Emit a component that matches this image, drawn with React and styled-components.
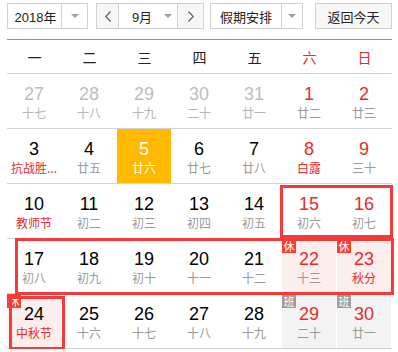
import React from 'react'
import styled, { createGlobalStyle } from 'styled-components'

const GlobalStyle = createGlobalStyle`
  body {
    margin: 0;
    background: #fff;
    font-family: "Liberation Sans", "Noto Sans CJK SC", sans-serif;
  }
`

const RED = '#e62b2b'

const Page = styled.div`
  padding: 3px 0 0 7px;
  width: 385px;
`

const Toolbar = styled.div`
  display: flex;
  height: 26px;
`

const Box = styled.div`
  display: flex;
  box-sizing: border-box;
  height: 26px;
  border: 1px solid #d2d2d2;
  background: #fff;
  margin-right: ${p => p.$gap || 0}px;
`

const Label = styled.div`
  width: ${p => p.$w}px;
  display: flex;
  align-items: center;
  justify-content: ${p => p.$align || 'center'};
  padding-left: ${p => p.$pl || 0}px;
  box-sizing: border-box;
  font-size: 13px;
  color: #222;
  font-family: "Liberation Sans", "Noto Sans CJK SC", sans-serif;
`

const ArrowCell = styled.div`
  width: ${p => p.$w}px;
  border-left: ${p => (p.$line ? '1px solid #d2d2d2' : 'none')};
  display: flex;
  align-items: center;
  justify-content: center;
`

const Caret = styled.span`
  width: 0;
  height: 0;
  border-left: 4px solid transparent;
  border-right: 4px solid transparent;
  border-top: 4px solid #a0a0a0;
`

const NavBtn = styled.div`
  width: ${p => p.$w}px;
  background: #f6f6f6;
  display: flex;
  align-items: center;
  justify-content: center;
  border-left: ${p => (p.$left ? '1px solid #d2d2d2' : 'none')};
  border-right: ${p => (p.$right ? '1px solid #d2d2d2' : 'none')};
`

const TodayBtn = styled.div`
  width: 82px;
  height: 26px;
  box-sizing: border-box;
  border: 1px solid #d2d2d2;
  background: #f7f7f7;
  display: flex;
  align-items: center;
  justify-content: center;
  font-size: 13px;
  color: #222;
  font-family: "Noto Sans CJK SC", sans-serif;
`

const Calendar = styled.div`
  margin-top: 10px;
  border-top: 1px solid #5b9cf0;
`

const Week = styled.div`
  display: grid;
  grid-template-columns: repeat(7, 55px);
  height: 33px;
  border-bottom: 1px solid #d4d4d4;
`

const WeekDay = styled.div`
  display: flex;
  align-items: center;
  justify-content: center;
  font-size: 14px;
  color: ${p => (p.$weekend ? RED : '#222')};
  font-family: "Noto Sans CJK SC", sans-serif;
`

const Body = styled.div`
  position: relative;
`

const Row = styled.div`
  display: grid;
  grid-template-columns: repeat(7, 55px);
  height: 54px;
  border-bottom: 1px solid #d4d4d4;
`

const Cell = styled.div`
  position: relative;
  margin-right: 1px;
  background: ${p => p.$bg || 'transparent'};
  display: flex;
  flex-direction: column;
  align-items: center;
  padding-top: 10px;
  box-sizing: border-box;
`

const Num = styled.div`
  font-size: 18px;
  line-height: 20px;
  color: ${p => p.$color};
`

const Lunar = styled.div`
  margin-top: 1px;
  font-size: 12px;
  line-height: 16px;
  white-space: nowrap;
  color: ${p => p.$color};
  font-family: "Noto Sans CJK SC", sans-serif;
`

const Badge = styled.span`
  position: absolute;
  top: 0;
  left: 0;
  width: 14px;
  height: 14px;
  background: ${p => (p.$work ? '#9c9c9c' : '#f5402f')};
  color: #fff;
  font-size: 11px;
  line-height: 14px;
  text-align: center;
  font-family: "Noto Sans CJK SC", sans-serif;
`

// red annotation frames drawn over the grid
const Mark = styled.div`
  position: absolute;
  left: ${p => p.$l}px;
  top: ${p => p.$t}px;
  width: ${p => p.$w}px;
  height: ${p => p.$h}px;
  box-sizing: border-box;
  border: 3px solid #f43a3a;
  pointer-events: none;
`

const Chevron = ({ dir }) => (
  <svg width="6" height="11" viewBox="0 0 6 11">
    <polyline
      points={dir === 'left' ? '5.5,0.5 0.8,5.5 5.5,10.5' : '0.5,0.5 5.2,5.5 0.5,10.5'}
      fill="none"
      stroke="#4b5a70"
      strokeWidth="1.1"
    />
  </svg>
)

const weekNames = ['一', '二', '三', '四', '五', '六', '日']

// d: day, l: lunar text, o: other month, h: lunar is holiday (red),
// bg: background kind, b: badge
const rows = [
  [
    { d: 27, l: '十七', o: true }, { d: 28, l: '十八', o: true }, { d: 29, l: '十九', o: true },
    { d: 30, l: '二十', o: true }, { d: 31, l: '廿一', o: true }, { d: 1, l: '廿二' }, { d: 2, l: '廿三' },
  ],
  [
    { d: 3, l: '抗战胜...', h: true }, { d: 4, l: '廿五' }, { d: 5, l: '廿六', today: true },
    { d: 6, l: '廿七' }, { d: 7, l: '廿八' }, { d: 8, l: '白露', h: true }, { d: 9, l: '三十' },
  ],
  [
    { d: 10, l: '教师节', h: true }, { d: 11, l: '初二' }, { d: 12, l: '初三' },
    { d: 13, l: '初四' }, { d: 14, l: '初五' }, { d: 15, l: '初六' }, { d: 16, l: '初七' },
  ],
  [
    { d: 17, l: '初八' }, { d: 18, l: '初九' }, { d: 19, l: '初十' }, { d: 20, l: '十一' },
    { d: 21, l: '十二' }, { d: 22, l: '十三', bg: 'rest', b: '休' }, { d: 23, l: '秋分', h: true, bg: 'rest', b: '休' },
  ],
  [
    { d: 24, l: '中秋节', h: true, bg: 'rest', b: '休' }, { d: 25, l: '十六' }, { d: 26, l: '十七' },
    { d: 27, l: '十八' }, { d: 28, l: '十九' }, { d: 29, l: '二十', bg: 'work', b: '班' },
    { d: 30, l: '廿一', bg: 'work', b: '班' },
  ],
]

const bgs = { rest: '#fdeeee', work: '#f3f3f3' }

const Day = ({ item, col }) => {
  const weekend = col >= 5
  let numColor = '#000'
  let lunarColor = '#999'
  let bg = bgs[item.bg]
  if (item.o) {
    numColor = '#bdbdbd'
    lunarColor = '#b5b5b5'
  } else if (weekend) {
    numColor = RED
  }
  if (item.h) lunarColor = RED
  if (item.today) {
    numColor = '#fff'
    lunarColor = '#fff'
    bg = '#ffb900'
  }
  return (
    <Cell $bg={bg}>
      {item.b && <Badge $work={item.bg === 'work'}>{item.b}</Badge>}
      <Num $color={numColor}>{item.d}</Num>
      <Lunar $color={lunarColor}>{item.l}</Lunar>
    </Cell>
  )
}

export default function App() {
  return (
    <Page>
      <GlobalStyle />
      <Toolbar>
        <Box $gap={8}>
          <Label $w={53} $pl={2}>2018年</Label>
          <ArrowCell $w={25} $line><Caret /></ArrowCell>
        </Box>
        <Box $gap={6}>
          <NavBtn $w={21} $right><Chevron dir="left" /></NavBtn>
          <Label $w={40} $pl={6}>9月</Label>
          <ArrowCell $w={18}><Caret /></ArrowCell>
          <NavBtn $w={25} $left><Chevron dir="right" /></NavBtn>
        </Box>
        <Box $gap={12}>
          <Label $w={70}>假期安排</Label>
          <ArrowCell $w={20} $line><Caret /></ArrowCell>
        </Box>
        <TodayBtn>返回今天</TodayBtn>
      </Toolbar>

      <Calendar>
        <Week>
          {weekNames.map((w, i) => (
            <WeekDay key={w} $weekend={i >= 5}>{w}</WeekDay>
          ))}
        </Week>
        <Body>
          {rows.map((row, r) => (
            <Row key={r}>
              {row.map((item, c) => (
                <Day key={c} item={item} col={c} />
              ))}
            </Row>
          ))}
          <Mark $l={273} $t={111} $w={113} $h={53} />
          <Mark $l={8} $t={164} $w={379} $h={57} />
          <Mark $l={2} $t={222} $w={56} $h={54} />
        </Body>
      </Calendar>
    </Page>
  )
}
